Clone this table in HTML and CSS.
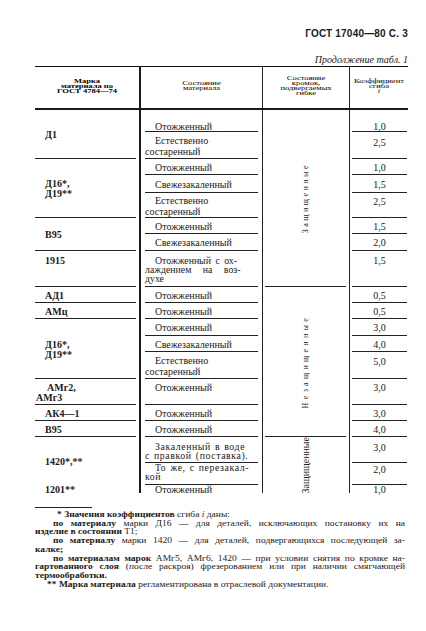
FILE: index.html
```html
<!DOCTYPE html>
<html lang="ru">
<head>
<meta charset="utf-8">
<title>ГОСТ 17040—80 С. 3</title>
<link rel="stylesheet" href="styles.css">
</head>
<body>
<div class="page">
  <div class="runhead">ГОСТ 17040—80 С. 3</div>
  <div class="cont">Продолжение табл. 1</div>

  <div class="tbl">
    <div class="hd"><div class="ht b">Марка<br>материала по<br>ГОСТ 4784—74</div></div>
    <div class="hd h2"><div class="ht">Состояние<br>материала</div></div>
    <div class="hd h1"><div class="ht">Состояние<br>кромок,<br>подвергаемых<br>гибке</div></div>
    <div class="hd h1"><div class="ht">Коэффициент<br>сгиба<br><i>i</i></div></div>

    <!-- r1 -->
    <div class="c c1 ln rs2"><div class="in">Д1</div></div>
    <div class="c c2 ln first"><div class="in"><span class="l ind">Отожженный</span></div></div>
    <div class="c c3 ln rs8"><div class="in"><span class="vt">Защищенные</span></div></div>
    <div class="c c4 ln first"><div class="in">1,0</div></div>
    <!-- r2 -->
    <div class="c c2 ln two"><div class="in"><span class="l ind">Естественно</span><span class="l">состаренный</span></div></div>
    <div class="c c4 ln top t6"><div class="in">2,5</div></div>
    <!-- r3 -->
    <div class="c c1 ln rs3"><div class="in">Д16*,<br>Д19**</div></div>
    <div class="c c2 ln"><div class="in"><span class="l ind">Отожженный</span></div></div>
    <div class="c c4 ln"><div class="in">1,0</div></div>
    <!-- r4 -->
    <div class="c c2 ln"><div class="in"><span class="l ind">Свежезакаленный</span></div></div>
    <div class="c c4 ln"><div class="in">1,5</div></div>
    <!-- r5 -->
    <div class="c c2 ln two"><div class="in"><span class="l ind">Естественно</span><span class="l">состаренный</span></div></div>
    <div class="c c4 ln top t4"><div class="in">2,5</div></div>
    <!-- r6 -->
    <div class="c c1 ln rs2"><div class="in">В95</div></div>
    <div class="c c2 ln"><div class="in"><span class="l ind">Отожженный</span></div></div>
    <div class="c c4 ln"><div class="in">1,5</div></div>
    <!-- r7 -->
    <div class="c c2 ln"><div class="in"><span class="l ind">Свежезакаленный</span></div></div>
    <div class="c c4 ln"><div class="in">2,0</div></div>
    <!-- r8 -->
    <div class="c c1 ln top"><div class="in">1915</div></div>
    <div class="c c2 ln multi"><div class="in"><span class="l ind ws2">Отожженный с ох-</span><span class="l ws9">лаждением на воз-</span><span class="l">духе</span></div></div>
    <div class="c c4 ln top"><div class="in">1,5</div></div>
    <!-- r9 -->
    <div class="c c1 ln"><div class="in">АД1</div></div>
    <div class="c c2 ln"><div class="in"><span class="l ind">Отожженный</span></div></div>
    <div class="c c3 ln rs8"><div class="in"><span class="vt wide">Незащищенные</span></div></div>
    <div class="c c4 ln"><div class="in">0,5</div></div>
    <!-- r10 -->
    <div class="c c1 ln"><div class="in">АМц</div></div>
    <div class="c c2 ln"><div class="in"><span class="l ind">Отожженный</span></div></div>
    <div class="c c4 ln"><div class="in">0,5</div></div>
    <!-- r11 -->
    <div class="c c1 ln rs3"><div class="in">Д16*,<br>Д19**</div></div>
    <div class="c c2 ln"><div class="in"><span class="l ind">Отожженный</span></div></div>
    <div class="c c4 ln"><div class="in">3,0</div></div>
    <!-- r12 -->
    <div class="c c2 ln"><div class="in"><span class="l ind">Свежезакаленный</span></div></div>
    <div class="c c4 ln"><div class="in">4,0</div></div>
    <!-- r13 -->
    <div class="c c2 ln two"><div class="in"><span class="l ind">Естественно</span><span class="l">состаренный</span></div></div>
    <div class="c c4 ln top"><div class="in">5,0</div></div>
    <!-- r14 -->
    <div class="c c1 ln hang"><div class="in"><span class="l ind">АМг2,</span><span class="l">АМг3</span></div></div>
    <div class="c c2 ln up"><div class="in"><span class="l ind">Отожженный</span></div></div>
    <div class="c c4 ln up"><div class="in">3,0</div></div>
    <!-- r15 -->
    <div class="c c1 ln"><div class="in">АК4—1</div></div>
    <div class="c c2 ln"><div class="in"><span class="l ind">Отожженный</span></div></div>
    <div class="c c4 ln"><div class="in">3,0</div></div>
    <!-- r16 -->
    <div class="c c1 ln"><div class="in">В95</div></div>
    <div class="c c2 ln"><div class="in"><span class="l ind">Отожженный</span></div></div>
    <div class="c c4 ln"><div class="in">4,0</div></div>
    <!-- r17 -->
    <div class="c c1 rs2"><div class="in">1420*,**</div></div>
    <div class="c c2 ln multi spaced"><div class="in"><span class="l ind">Закаленный в воде</span><span class="l">с правкой (поставка).</span></div></div>
    <div class="c c3 rs3"><div class="in"><span class="vt plain">Защищенные</span></div></div>
    <div class="c c4 ln top t6"><div class="in">3,0</div></div>
    <!-- r18 -->
    <div class="c c2 ln multi spaced up0"><div class="in"><span class="l ind">То же, с перезакал-</span><span class="l">кой</span></div></div>
    <div class="c c4 ln top t2"><div class="in">2,0</div></div>
    <!-- r19 -->
    <div class="c c1"><div class="in">1201**</div></div>
    <div class="c c2"><div class="in"><span class="l ind">Отожженный</span></div></div>
    <div class="c c4"><div class="in">1,0</div></div>
  </div>

  <div class="sep"></div>

  <div class="notes">
    <span class="nl i22"><b>* Значения коэффициентов</b> сгиба <i>i</i> даны:</span>
    <span class="nl j i18"><b>по материалу</b> марки Д16 — для деталей, исключающих постановку их на</span>
    <span class="nl"><b>изделие в состоянии</b> Т1;</span>
    <span class="nl j i18"><b>по материалу</b> марки 1420 — для деталей, подвергающихся последующей за-</span>
    <span class="nl"><b>калке;</b></span>
    <span class="nl j i18"><b>по материалам марок</b> АМг5, АМг6, 1420 — при условии снятия по кромке на-</span>
    <span class="nl j"><b>гартованного слоя</b> (после раскроя) фрезерованием или при наличии смягчающей</span>
    <span class="nl"><b>термообработки.</b></span>
    <span class="nl i12"><b>** Марка материала</b> регламентирована в отраслевой документации.</span>
  </div>
</div>
</body>
</html>
```

FILE: styles.css
```css
html, body {
  margin: 0;
  padding: 0;
  background: #ffffff;
}

body {
  color: #1a1a1a;
  font-family: "Liberation Serif", "DejaVu Serif", serif;
}

.page {
  width: 373px;
  padding: 28px 18px 0 35px;
}

.runhead {
  text-align: right;
  font-family: "Liberation Sans", "DejaVu Sans", sans-serif;
  font-weight: bold;
  font-size: 10px;
  line-height: 12px;
  letter-spacing: 0.2px;
}

.cont {
  margin-top: 14px;
  text-align: right;
  font-style: italic;
  font-size: 10px;
  line-height: 12px;
}

/* ---------- table ---------- */
.tbl {
  display: grid;
  grid-template-columns: 104px 123px 87px 59px;
  grid-template-rows: 43px 22px 27px 16px 18px 25px 16px 17px 36px 16px 16px 17px 16px 27px 26px 16px 16px 26px 22px 8px;
  border-top: 1px solid #111;
  font-size: 10px;
}

.hd {
  display: flex;
  align-items: center;
  justify-content: center;
  text-align: center;
  border-bottom: 2px solid #1a1a1a;
  padding-bottom: 4px;
}

.hd.h2 { border-left: 2px solid #1a1a1a; }
.hd.h1 { border-left: 1px solid #222; }

.ht {
  color: #000;
  font-size: 8.5px;
  line-height: 8px;
  transform: scaleY(0.62);
}

.ht.b { font-weight: bold; }

.c {
  display: flex;
  min-width: 0;
}

.in {
  flex: 1;
  min-width: 0;
  display: flex;
  flex-direction: column;
  justify-content: center;
  padding-top: 2px;
  line-height: 10px;
}

.ln > .in { border-bottom: 1px solid #232323; }

.l {
  display: block;
  white-space: nowrap;
}

.l.ind { padding-left: 10px; }

.ws2 { word-spacing: 2px; }
.ws9 { word-spacing: 9px; }

.rs2 { grid-row: span 2; }
.rs3 { grid-row: span 3; }
.rs8 { grid-row: span 8; }

.c1 > .in {
  margin-right: 3px;
  padding-left: 10px;
  font-weight: bold;
}

.c1.hang > .in { padding-left: 1px; }
.c1.hang .l.ind { padding-left: 11px; }

.c2 { border-left: 2px solid #1a1a1a; }

.c2 > .in { margin: 0 4px; }

.c3 { border-left: 1px solid #222; }

.c3 > .in {
  margin: 0 3px 0 2px;
  padding-top: 0;
  align-items: center;
}

.c4 { border-left: 1px solid #222; }

.c4 > .in {
  margin: 0 1px 0 2px;
  text-align: center;
}

.first > .in { padding-top: 12px; }

.top > .in {
  justify-content: flex-start;
  padding-top: 5px;
}

.top.t6 > .in { padding-top: 6px; }
.top.t4 > .in { padding-top: 4px; }
.top.t2 > .in { padding-top: 2px; }

.up > .in {
  padding-top: 0;
  padding-bottom: 8px;
}

.up0 > .in {
  justify-content: flex-start;
  padding-top: 0;
}

.two > .in { line-height: 11px; }

.multi > .in {
  font-size: 9.8px;
  line-height: 9px;
}

.spaced > .in {
  letter-spacing: 0.6px;
  word-spacing: 1px;
}

.vt {
  writing-mode: vertical-rl;
  transform: rotate(180deg);
  font-size: 8px;
  line-height: 8px;
  letter-spacing: 2.5px;
}

.vt.wide { letter-spacing: 3.3px; }

.vt.plain {
  font-size: 10px;
  line-height: 10px;
  letter-spacing: 0;
}

/* ---------- footnotes ---------- */
.sep {
  width: 57px;
  margin-top: 14px;
  border-top: 1px solid #222;
}

.notes {
  margin: 2px 3px 0 0;
  font-size: 9.5px;
  line-height: 10.7px;
  transform: scaleY(0.82);
  transform-origin: top left;
}

.nl {
  display: block;
  white-space: nowrap;
}

.nl.j {
  text-align: justify;
  text-align-last: justify;
}

.nl.i22 { padding-left: 22px; }
.nl.i18 { padding-left: 18px; }
.nl.i12 { padding-left: 12px; }
```
